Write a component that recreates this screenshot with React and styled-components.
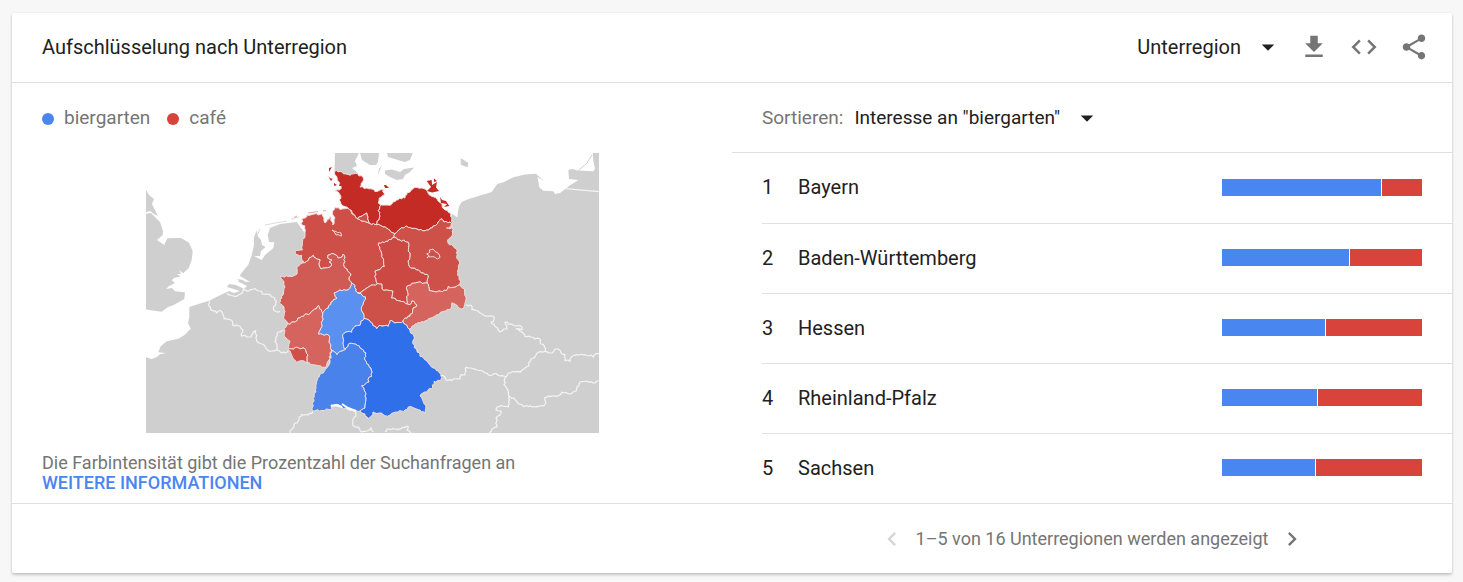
import React, { useState } from 'react';
import styled, { createGlobalStyle } from 'styled-components';
import {
  MdArrowDropDown,
  MdChevronLeft,
  MdChevronRight,
  MdCode,
  MdFileDownload,
  MdShare,
} from 'react-icons/md';

const GlobalStyle = createGlobalStyle`
  * {
    box-sizing: border-box;
  }
  body {
    margin: 0;
    background: #f7f7f7;
    font-family: Roboto, Arial, sans-serif;
    color: #212121;
  }
`;

const Card = styled.section`
  margin: 13px 11px 9px 12px;
  background: #fff;
  border-radius: 2px;
  box-shadow: 0 2px 3px rgba(0, 0, 0, 0.2), 0 0 2px rgba(0, 0, 0, 0.08);
`;

const Header = styled.header`
  display: flex;
  align-items: center;
  height: 70px;
  padding: 0 13px 2px 30px;
  border-bottom: 1px solid #e0e0e0;
`;

const Title = styled.h2`
  flex: 1;
  margin: 0;
  font-size: 20px;
  font-weight: 400;
`;

const SelectBox = styled.div`
  display: flex;
  align-items: center;
  gap: 12px;
  margin-right: ${props => (props.$end ? '6px' : '0')};
`;

const Select = styled.select`
  appearance: none;
  field-sizing: content;
  padding: 0;
  border: 0;
  background: none;
  color: #212121;
  font-family: inherit;
  font-size: ${props => props.$size};
`;

const IconButton = styled.button`
  display: flex;
  align-items: center;
  justify-content: center;
  width: ${props => props.$width};
  height: 48px;
  padding: 0;
  border: 0;
  background: none;
  color: #757575;
  cursor: pointer;

  &:disabled {
    color: #d6d6d6;
    cursor: default;
  }
`;

const Body = styled.div`
  display: grid;
  grid-template-columns: 1fr 1fr;
`;

const MapColumn = styled.div`
  padding: 0 30px;
`;

const Legend = styled.ul`
  display: flex;
  align-items: center;
  gap: 17px;
  height: 70px;
  margin: 0;
  padding: 0 0 2px;
  list-style: none;
`;

const LegendItem = styled.li`
  display: flex;
  align-items: center;
  gap: 10px;
  color: #757575;
  font-size: 19px;

  &::before {
    content: '';
    width: 12px;
    height: 12px;
    margin-top: 4px;
    border-radius: 50%;
    background: ${props => props.$color};
  }
`;

const Map = styled.svg`
  display: block;
  width: 100%;
  max-width: 453px;
  margin: 0 auto;
`;

const Note = styled.p`
  margin: 20px 0 10px;
  color: #757575;
  font-size: 18px;
  line-height: 20px;
`;

const MoreLink = styled.a`
  display: block;
  color: #4a86f0;
  font-weight: 500;
  text-decoration: none;
  text-transform: uppercase;
`;

const SortBar = styled.div`
  display: flex;
  align-items: center;
  gap: 11px;
  height: 70px;
  padding-left: 30px;
  border-bottom: 1px solid #e0e0e0;
`;

const SortLabel = styled.label`
  color: #757575;
  font-size: 19px;
`;

const RegionList = styled.ol`
  margin: 0 0 0 30px;
  padding: 0;
  list-style: none;
`;

const RegionRow = styled.li`
  display: flex;
  align-items: center;
  height: 70px;
  padding: 0 30px 2px 0;
  font-size: 20px;

  & + & {
    border-top: 1px solid #e0e0e0;
  }
`;

const Rank = styled.span`
  width: 36px;
`;

const RegionName = styled.span`
  flex: 1;
`;

const Bar = styled.div`
  width: 200px;
  height: 17px;
  background: #d8433b;
`;

const BarShare = styled.div`
  height: 100%;
  border-right: 1px solid #fff;
  background: #4a86f0;
`;

const Footer = styled.footer`
  display: grid;
  grid-template-columns: 1fr 1fr;
  height: 70px;
  border-top: 1px solid #e0e0e0;
`;

const Pager = styled.nav`
  grid-column: 2;
  display: flex;
  align-items: center;
  justify-content: center;
  gap: 10px;
  color: #757575;
  font-size: 18px;
`;

const regions = [
  { name: 'Bayern', share: 80 },
  { name: 'Baden-Württemberg', share: 64 },
  { name: 'Hessen', share: 52 },
  { name: 'Rheinland-Pfalz', share: 48 },
  { name: 'Sachsen', share: 47 },
];

const land = [
  // Great Britain
  'M145 188L149 195L154 199L152 204L155 210L158 216L154 214L150 211L145 212.500Z',
  'M145 214L151 213L160 222L163 231L162.700 235L157 240L164.300 245L167.300 238.300L181 238L189 242.700L192.700 251L191.700 260L188.700 268L183.300 273.300L179 270L181 274L177 274L180.700 276.300L174 278L171.700 280.300L175 283L169 286L166 289L172 288L175 291.300L185 292.300L184.300 299L173.300 305.300L168 307L161.700 311.700L145 309.300Z',
  // mainland
  'M145 357L151.700 359L157 357L160 354.300L166 353L158.300 352.300L160.700 346.300L166.700 341.300L178.300 338.700L185 334.700L189.300 330L191 329L188 323L189.300 317L189.300 307.300L192 306L209.300 300.700L220 295.300L229 291L234 293L240 291L227 287L229 284L236 285L244 289L247 286L237 281L250 282L240 276L240.700 274L248.300 264.700L251.700 255L254 245L254 237L257 230L257.500 236L261 240L262 245L265.500 247L261 251L260 256L254 256L261.700 260L265 255L273.300 248L274.300 242.300L269 242L267.700 235L270 228L280 224L296.700 222L310 240L440 240L452.300 214L457.300 217.500L458 211L459.300 206L461.700 202L466.700 199.700L480 195.500L491.700 192L497.300 184L503.300 182.300L513.300 177.300L525 174.500L536 173.700L544 181L537.500 177L539.300 187.300L543.300 190.700L553.300 191.300L555 194L560 193L569 186L578.300 180L569 179L568.300 169.700L573.300 169L577 170.500L593.300 171.300L595 168.700L593.300 161L592.700 153H599V434H145Z',
  // Denmark
  'M335 153H359L355 161L357 166L352 168L358 173L350 175L334.500 171.500Z',
  'M360 153H379L378 162L376 165L370 165L362 160Z',
  'M387 153H412.700L410 160L405 162L398 160L388 157Z',
  'M385 170.500L392 169.500L400 172L404 169L414 167.500L410 172L405 175L403 179L396.700 180L390 177L385 174Z',
  'M382 165L380 170L377.500 176L379 169Z',
  // Bornholm
  'M460.700 158L468.300 163L467.700 167.300L460.700 164.700Z',
  // Zeeland
  'M237 279L243 280L246 283L241 283Z',
];

const borders = [
  'M209.300 300.700L209 306L210.700 309.700L216.700 313L220 310.500L222 312L224 319L231.700 320.300L232.700 325.300L240 326L243 330L241.500 336L251 337L253 333L255.700 330.700L256.700 341.300L265 346.300L270 351.300L276.700 349.700L281.700 353L288.300 351.300',
  'M276.700 349.700L277 346L275 341.300L278 332L283.300 330.300',
  'M226.700 293L229 295L236.700 296.300L242 293L243.300 289.700L249 291L255 288.500L259 291L261.700 291.300L262 294L267 294L273.300 297L276.500 301L273.300 308.700L276 311.500L280 311.300',
  'M313 411.500L308 415L301.700 414.500L298.300 421L294 425L290 433',
  'M343.300 404.700L347 409L355 411.300L356 416L353 419L352.700 425L358 427L361.700 432L367 431L371 428L373.500 432',
  'M385 432L386.700 429L394 429L400 428.700L403 427L408.300 426.300L407 430L411 433',
  'M466 304.700L471 305L472 309.700L478 311L482 314L488 316L493.300 316L494 320L491 322L496 327L500 332L504 329L507 329L505 322.300L511 324L515 326L518 325.500L522 327L522 330L516 329L522 332L525 336.300L531 337L535 339L539.300 338.700L541 344L544.300 346.300L545 351.300L549 353L552 353L555 349L558 349L561 353L565 354.700L565 360.700L568 360L570 361.500L572 356.300L579 355L585 354.700L588 356L591 355L593.300 357L596 353.700L599 353.700',
  'M545 351.300L538.300 352.300L535 357L530.700 359L528.300 366.300L524 369L520 372.300L513 371.500L508.300 373L506 377',
  'M440.700 375.300L445 377L446 380L451.700 380.700L455 379L460 379L461 374.700L465 375L466 367.300L471 368L477 370L483.300 371.500L490 375.700L496 373.500L500 376L506 377L504 384.700L508 390L509 396.300L515 399.700L519 404L523.300 406.300L534 406.500L544 405.700L546 403L545 397.300L552 396L559.300 395.300L561.700 392L566 392.500L570 394L576 391L580 382L587 381L593 383L599 381',
  'M509 396.300L508.300 407L503 406L497 407L496 410L501 411L500 415L496 418L497 427L492 429L489 433',
];

const states = [
  // Niedersachsen
  {
    fill: '#cd4f48',
    d: 'M302 225L305 226L304.500 228L305 234L302.300 245L302.300 250L296 250.300L295.300 254L301.700 255.300L302.700 263L306.700 261.300L309 258L313.300 255.300L317 259L320 259.700L319 265L321 269L325 268L330 267L331.700 265L329 262L332 260L327.700 258L328 255L333.300 253.700L336 255L338 258L342 257L343.300 254L345 258L343.500 264.700L347 269L351 275L349 280L351.700 283L355 285.500L357 292.500L361.700 292L366 288.500L370 286L377.300 283.700L376 279.500L375 271L378 270L384.300 266.500L382 255L381 251L378.500 243L388 241.300L394.300 237.300L395 233.700L391 232L385 226.700L376.700 224.700L370 223.500L362 221L357.300 218.700L353.300 214.700L349 209L342 209L335 207.300L332.500 213L335 218L332.700 225L330 216.500L325 223L324 218L321.700 213.700L307 215L305 218L302 219.700Z',
  },
  // Bremen
  { fill: '#cd4f48', d: 'M332 230L336 231.500L341 233L341.500 236L336 235Z' },
  // Schleswig-Holstein
  {
    fill: '#c52b25',
    d: 'M334.700 171.300L341.700 172L346 174L350 175.300L357.300 173.500L359 176L363 177L362.700 182L360 187L366.700 188L372 189L377 191.500L383.300 189.700L384.300 195L379.300 198L378.300 203L381.500 205L378.300 210.700L380 216.300L376.700 224.700L370 223.500L367.500 219L366.700 213L361 216.500L357.300 218.700L353.300 214L348.300 208L342 205.300L339.300 200L341 198L338.300 192L335.500 191L341 188.500L338.300 181.500L335 175Z',
  },
  // Hamburg
  { fill: '#cd4f48', d: 'M357.300 218.700L361 216.500L366.700 213L367.500 219L370 223.500L362 221Z' },
  // Mecklenburg-Vorpommern
  {
    fill: '#c52b25',
    d: 'M381.500 205L390 205.300L393 202L396.700 200L405 198L407 193L410 192L415 187.300L421.700 188L426 189.500L430 195.300L437 199L441 203L444 209L450 213L452.300 223L452.300 227L450 222L444 222L441 218.700L437.300 224L432 228L425 230.700L417 229L412 228.500L406.700 226L400 229L395 233.700L391 232L385 226.700L376.700 224.700L380 216.300L378.300 210.700Z',
  },
  // Brandenburg
  {
    fill: '#cd5049',
    d: 'M395 233.700L400 229L406.700 226L412 228.500L417 229L425 230.700L432 228L437.300 224L441 218.700L444 222L450 222L452 227L446.500 228L453.300 229L452.300 235.300L447.700 240L448.300 243.700L453 246L457.300 251L456.700 256.300L460 263L458.500 269L457.300 275L461 281L460 285L453 287.300L448.300 286.500L446 290.500L437 292L429.300 290.700L427.300 283L428.300 275.700L420 271.500L409.300 266.500L408 261L410 255L408.300 251.300L408.300 242.300L400 240L394.300 237.300Z',
  },
  // Berlin
  { fill: '#cd5049', d: 'M426.700 254L430 252L429.300 250L433 249L435 251.500L438 253L440 257.500L437.300 259L432.700 256.700L427 258L429 255.500Z' },
  // Sachsen-Anhalt
  {
    fill: '#cc4842',
    d: 'M394.300 237.300L388 241.300L378.500 243L381 251L382 255L384.300 266.500L378 270L375 271L376 279.500L377.300 283.700L381.700 284L382 289L386 290L392.700 291L391.500 298L400 301L407.500 304L407.300 286L417 282.500L427.300 283L428.300 275.700L420 271.500L409.300 266.500L408 261L410 255L408.300 251.300L408.300 242.300L400 240Z',
  },
  // Nordrhein-Westfalen
  {
    fill: '#d05b54',
    d: 'M302.700 263L296.700 267.300L297 274L290 276.300L280.500 276L284 282L285 287L283 295L279.300 303L284 307L285 311.300L283.500 318L288.300 324L295 322L298 318L303.300 316.500L311 312L316.700 308.700L318.500 305.500L322.700 313L328.300 308L331 302L337 298L334 293L340 290L348 289.700L351.700 283L349 280L351 275L347 269L343.500 264.700L345 258L343.300 254L342 257L338 258L336 255L333.300 253.700L328 255L327.700 258L332 260L329 262L331.700 265L330 267L325 268L321 269L319 265L320 259.700L317 259L313.300 255.300L309 258L306.700 261.300Z',
  },
  // Thüringen
  {
    fill: '#cd5049',
    d: 'M377.300 283.700L370 286L366 288.500L361.700 292L357 292.500L365.500 297L363.500 302L361.700 306.500L363 313L364 318.500L370 321L376.700 328.700L380 325.300L388.300 326.300L390 320.700L395 323L403 321.300L405 318L410 316.300L412.700 310L417 305L412 300.700L410 304.700L407.500 304L400 301L391.500 298L392.700 291L386 290L382 289L381.700 284Z',
  },
  // Sachsen
  {
    fill: '#d4645d',
    d: 'M407.300 286L417 282.500L427.300 283L429.300 290.700L437 292L446 290.500L448.300 286.500L453 287.300L460 285L464.500 289L466 297L463.500 308.500L459 308L456.700 305L451.700 303L451.700 307L446 311L437 314.700L431 318L425 321L415 324L409.300 329L403 321.300L405 318L410 316.300L412.700 310L417 305L412 300.700L410 304.700L407.500 304Z',
  },
  // Rheinland-Pfalz
  {
    fill: '#d4645d',
    d: 'M318.500 305.500L316.700 308.700L311 312L303.300 316.500L298 318L295 322L288.300 324L284 328.500L284 335L290 341.300L288.300 350L296.700 347.300L305 348.700L308 355L307 363L316.700 365.300L326 367.500L329 360L331.500 350L328.500 335L318.500 334L321 328L322.300 321L322.700 313Z',
  },
  // Saarland
  { fill: '#d05049', d: 'M288.300 350L296.700 347.300L305 348.700L308 355L307 363L303.300 360.700L296.700 362.500L292 356Z' },
  // Hessen
  {
    fill: '#5a90ef',
    d: 'M351.700 283L348 289.700L340 290L334 293L337 298L331 302L328.300 308L322.700 313L322.300 321L321 328L318.500 334L328.500 335L331.500 350L337 354.700L342 351L345 349.700L343 343L342.700 334.700L346 332L351.700 332.300L355 326.300L360 325.300L361 321L364 318.500L363 313L361.700 306.500L363.500 302L365.500 297L357 292.500L355 285.500Z',
  },
  // Baden-Württemberg
  {
    fill: '#4882ea',
    d: 'M331.500 350L330 361L326.500 368L319 377L316 388L314 395L312.500 410.700L323 410.500L331.700 408.700L331 405L336 404.500L342 407L351.700 410.700L360 411L365 408L366 398L364 388L361.700 386L369 382L369 377.300L371.700 376.300L371 368L365 360L366 353L362 349L357.300 345.300L350 343L345 349.700L342 351L337 354.700Z',
  },
  // Bayern
  {
    fill: '#306fea',
    d: 'M364 318.500L361 321L360 325.300L355 326.300L351.700 332.300L346 332L342.700 334.700L343 343L345 349.700L350 343L357.300 345.300L362 349L366 353L365 360L371 368L371.700 376.300L369 377.300L369 382L361.700 386L364 388L366 398L365 408L360 411L365 414L367.700 419L371 416.500L373 412L379 413L385 415.700L390 415L396 412L407 409.700L408.300 407L415 408.500L420 410L425 413.500L425.500 405L420 396L423 393L432.700 387.300L434 381.300L441 381L441 374L433.300 368L427 361L420 356.300L417 350L413 344L414.500 338L410 331L409.300 329L403 321.300L395 323L390 320.700L388.300 326.300L380 325.300L376.700 328.700L370 321Z',
  },
];

// Small North Sea and Baltic islands, drawn without an outline
const islands = [
  'M426.700 181L431.700 180L432 185L437 182L436 187.500L439 191L432 192.500L427 191L431 187Z',
  'M440 197L442 200L446 201L449.300 206L444 207L447 204L441 203Z',
  'M384 185L386 185L389 188L385 188Z',
  'M434 178.500L437 181L434 182Z',
  'M329 168L332 167L329 172Z',
  'M328 176L332 180L331 181Z',
  'M334 183L337 185L334 186Z',
  'M330 178L333 179L331 180Z',
  'M340 183L343 186L339 186Z',
];

// Breaks one edge into short jagged steps. The end points are ordered first,
// so two neighbours that share the edge get the same line.
function jagEdge(a, b) {
  const flip = a[0] > b[0] || (a[0] === b[0] && a[1] > b[1]);
  const [p, q] = flip ? [b, a] : [a, b];
  const dx = q[0] - p[0];
  const dy = q[1] - p[1];
  const length = Math.hypot(dx, dy);
  const steps = Math.floor(length / 1.7);
  const points = [];
  for (let i = 1; i < steps; i++) {
    const t = i / steps;
    const seed = Math.sin(p[0] * 12.9 + q[1] * 78.2 + i * 37.7) * 43758.5;
    const shift = (seed - Math.floor(seed) - 0.5) * 1.9;
    points.push([p[0] + dx * t - (dy / length) * shift, p[1] + dy * t + (dx / length) * shift]);
  }
  return flip ? points.reverse() : points;
}

function jagged(d) {
  const closed = d.endsWith('Z');
  const points = d
    .replace(/[MZ]/g, '')
    .split('L')
    .map(pair => pair.split(' ').map(Number));
  const ring = closed ? [...points, points[0]] : points;
  const out = [ring[0]];
  for (let i = 1; i < ring.length; i++) {
    out.push(...jagEdge(ring[i - 1], ring[i]), ring[i]);
  }
  return `M${out.map(p => `${p[0].toFixed(1)} ${p[1].toFixed(1)}`).join('L')}${closed ? 'Z' : ''}`;
}

function RegionMap() {
  return (
    <Map viewBox="146 153 453 280" role="img" aria-label="Interesse nach Unterregion">
      <g fill="#cfcfcf">
        {land.map(d => (
          <path key={d} d={d} />
        ))}
      </g>
      <g fill="none" stroke="#f4f4f4" strokeWidth="1.2" strokeLinejoin="round">
        {borders.map(d => (
          <path key={d} d={jagged(d)} />
        ))}
        <path d="M565.7 188.700L599 191.700" />
      </g>
      <path d="M592 155L587 163L569 179" fill="none" stroke="#cfcfcf" />
      <path
        d="M265 225L275 223L287 221M291 219L299 217M257 236L260 229"
        fill="none"
        stroke="#dcdcdc"
      />
      <path d="M294 217.500L297 216M308 213L318 211.500M323 211L326 210.500" fill="none" stroke="#e3a5a1" />
      <g stroke="#f0dedd" strokeLinejoin="round">
        {states.map(state => (
          <path key={state.d} d={jagged(state.d)} fill={state.fill} />
        ))}
      </g>
      {/* Bodensee */}
      <path d="M331 406L336 405L342 407M342 404L348 408L356 411" fill="none" stroke="#fff" strokeWidth="2" />
      <g fill="#c52b25">
        {islands.map(d => (
          <path key={d} d={d} />
        ))}
      </g>
    </Map>
  );
}

const App = () => {
  const [level, setLevel] = useState('Unterregion');
  const [sort, setSort] = useState('biergarten');

  return (
    <>
      <GlobalStyle />
      <Card>
        <Header>
          <Title>Aufschlüsselung nach Unterregion</Title>
          <SelectBox $end>
            <Select
              $size="20px"
              aria-label="Ebene"
              value={level}
              onChange={e => setLevel(e.target.value)}
            >
              <option>Unterregion</option>
              <option>Stadt</option>
            </Select>
            <MdArrowDropDown size={30} />
          </SelectBox>
          <IconButton $width="50px" aria-label="Herunterladen">
            <MdFileDownload size={30} />
          </IconButton>
          <IconButton $width="50px" aria-label="Einbetten">
            <MdCode size={30} />
          </IconButton>
          <IconButton $width="50px" aria-label="Teilen">
            <MdShare size={30} />
          </IconButton>
        </Header>
        <Body>
          <MapColumn>
            <Legend>
              <LegendItem $color="#4a86f0">biergarten</LegendItem>
              <LegendItem $color="#d8433b">café</LegendItem>
            </Legend>
            <RegionMap />
            <Note>
              Die Farbintensität gibt die Prozentzahl der Suchanfragen an
              <MoreLink href="#info">Weitere Informationen</MoreLink>
            </Note>
          </MapColumn>
          <div>
            <SortBar>
              <SortLabel htmlFor="sort">Sortieren:</SortLabel>
              <SelectBox>
                <Select
                  id="sort"
                  $size="19px"
                  value={sort}
                  onChange={e => setSort(e.target.value)}
                >
                  <option value="biergarten">Interesse an "biergarten"</option>
                  <option value="café">Interesse an "café"</option>
                </Select>
                <MdArrowDropDown size={30} />
              </SelectBox>
            </SortBar>
            <RegionList>
              {regions.map((region, i) => (
                <RegionRow key={region.name}>
                  <Rank>{i + 1}</Rank>
                  <RegionName>{region.name}</RegionName>
                  <Bar>
                    <BarShare style={{ width: `${region.share}%` }} />
                  </Bar>
                </RegionRow>
              ))}
            </RegionList>
          </div>
        </Body>
        <Footer>
          <Pager aria-label="Seiten">
            <IconButton $width="28px" aria-label="Zurück" disabled>
              <MdChevronLeft size={28} />
            </IconButton>
            <span>1–5 von 16 Unterregionen werden angezeigt</span>
            <IconButton $width="28px" aria-label="Weiter">
              <MdChevronRight size={28} />
            </IconButton>
          </Pager>
        </Footer>
      </Card>
    </>
  );
};

export default App;
